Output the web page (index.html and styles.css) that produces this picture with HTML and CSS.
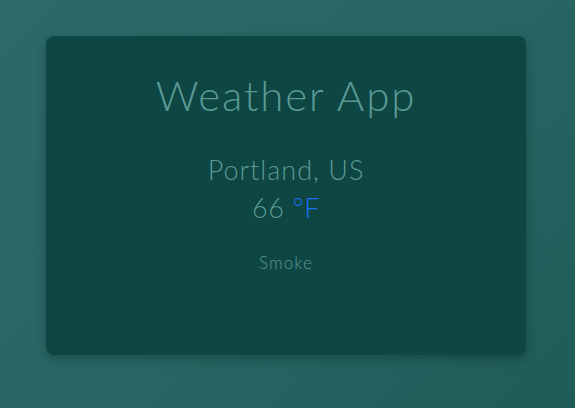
FILE: index.html
```html
<!DOCTYPE html>
<html>
<head>
<meta charset="utf-8">
<link rel="stylesheet" href="styles.css">
</head>
<body>
<main class="card">
  <h1 class="title">Weather App</h1>
  <div class="city">Portland, US</div>
  <div class="temp">66 <span class="unit">°F</span></div>
  <div class="desc">Smoke</div>
</main>
</body>
</html>
```
FILE: styles.css
```css
html, body {
  margin: 0;
  height: 100%;
}
body {
  background: linear-gradient(135deg, #2b6a69 0%, #286664 50%, #1f5c58 100%);
  font-family: "Lato", "Open Sans", sans-serif;
  font-weight: 300;
  color: #5b9995;
  padding: 36px 49px 0 46px;
  box-sizing: border-box;
}
.card {
  width: 480px;
  height: 319px;
  background: #0e4644;
  border-radius: 8px;
  box-shadow: 0 4px 12px rgba(0, 0, 0, 0.25);
  display: flex;
  flex-direction: column;
  align-items: center;
  box-sizing: border-box;
  padding-top: 33px;
}
.title {
  margin: 0;
  font-size: 42px;
  font-weight: 300;
  letter-spacing: 1.9px;
  line-height: 52px;
}
.city {
  margin-top: 31px;
  font-size: 27px;
  line-height: 36px;
  letter-spacing: 1px;
}
.temp {
  font-size: 27px;
  line-height: 36px;
  margin-top: 2px;
  letter-spacing: 0.6px;
}
.unit {
  color: #1a6ef5;
}
.desc {
  margin-top: 27px;
  font-size: 17px;
  line-height: 20px;
  letter-spacing: 1.1px;
  font-weight: 300;
}
```
